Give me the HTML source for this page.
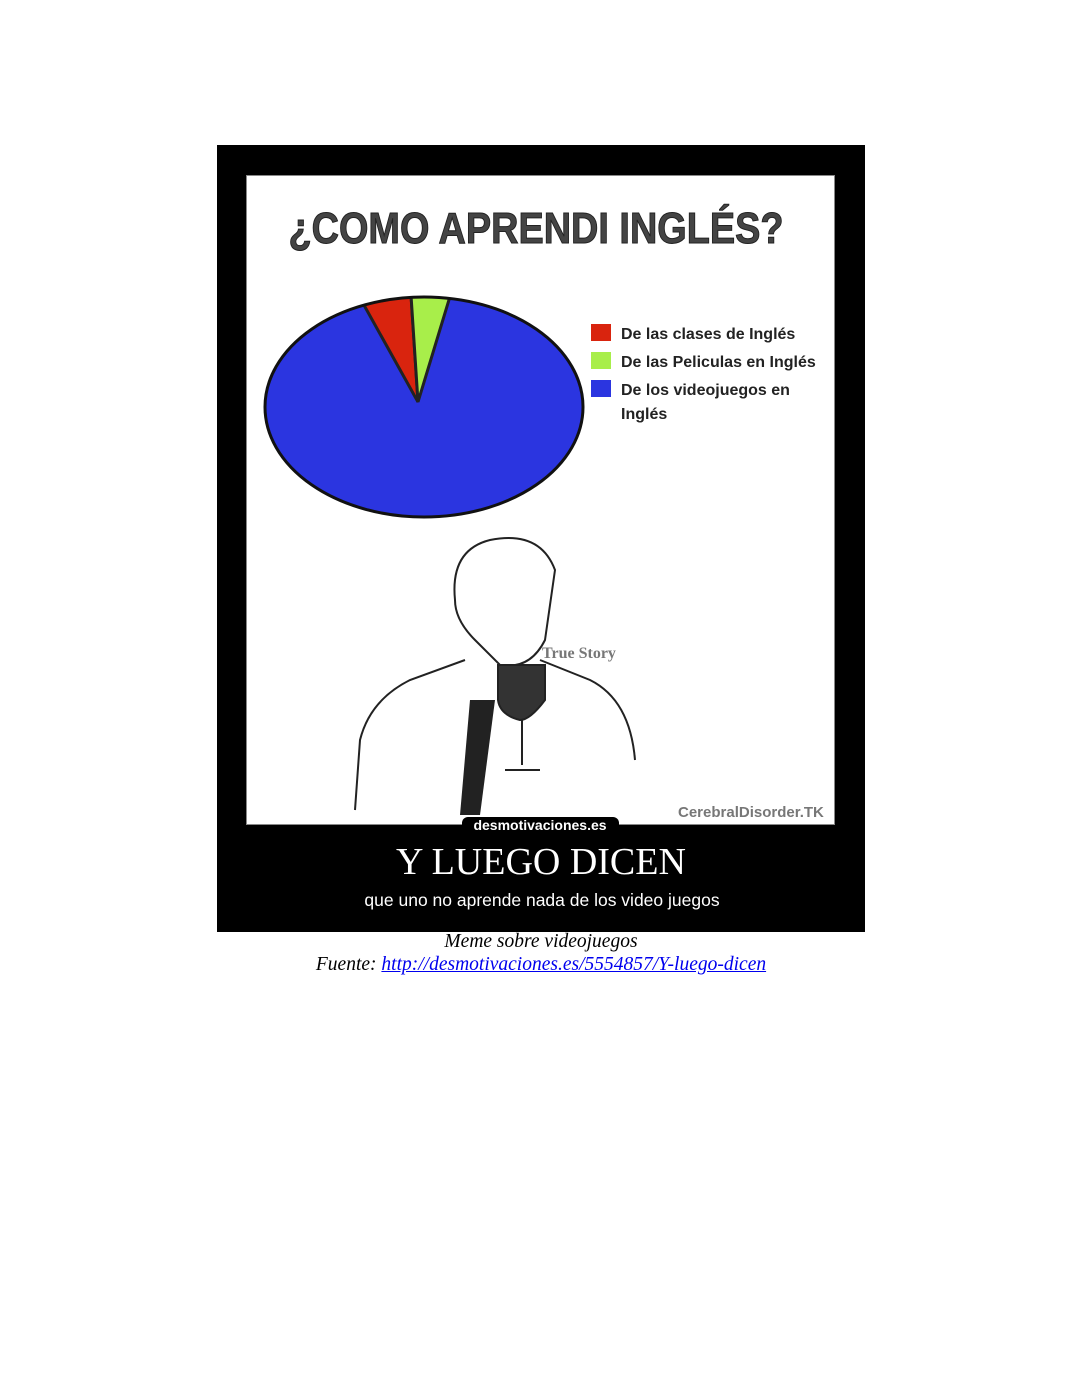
<!DOCTYPE html>
<html><head><meta charset="utf-8"><style>
body{margin:0;background:#fff;width:1082px;height:1400px;position:relative;overflow:hidden}
.blk{position:absolute;left:217px;top:145px;width:648px;height:787px;background:#000}
.inner{position:absolute;left:247px;top:176px;width:587px;height:648px;background:#fff;border:2px solid #fff;outline:1px solid #888;box-sizing:border-box}
.cap{position:absolute;left:0;width:1082px;text-align:center;font-family:"Liberation Serif",serif;font-style:italic;font-size:19.5px;color:#000}
</style></head><body>
<div class="blk"></div>
<div class="inner"></div>
<svg width="1082" height="1400" style="position:absolute;left:0;top:0">
<text x="536" y="243" text-anchor="middle" font-family="Liberation Sans,sans-serif" font-weight="bold" font-size="44" fill="#444" stroke="#222" stroke-width="1" textLength="495" lengthAdjust="spacingAndGlyphs">¿COMO APRENDI INGLÉS?</text>
<clipPath id="c"><ellipse cx="424" cy="407" rx="159" ry="110"/></clipPath>
<ellipse cx="424" cy="407" rx="159" ry="110" fill="#2b35e0"/>
<g clip-path="url(#c)" stroke="#222" stroke-width="3">
<polygon points="418,402 350,280 410,280" fill="#d9240e"/>
<polygon points="418,402 410,280 455,280" fill="#a8ee4a"/>
</g>
<ellipse cx="424" cy="407" rx="159" ry="110" fill="none" stroke="#111" stroke-width="3"/>
<rect x="591" y="324" width="20" height="17" fill="#d9240e"/>
<rect x="591" y="352" width="20" height="17" fill="#a8ee4a"/>
<rect x="591" y="380" width="20" height="17" fill="#2b35e0"/>
<g font-family="Liberation Sans,sans-serif" font-weight="bold" font-size="16" fill="#222">
<text x="621" y="339">De las clases de Inglés</text>
<text x="621" y="367">De las Peliculas en Inglés</text>
<text x="621" y="395">De los videojuegos en</text>
<text x="621" y="419">Inglés</text>
</g>
<g fill="none" stroke="#222" stroke-width="2">
<path d="M455 600 Q450 550 490 540 Q540 530 555 570 L545 640 Q530 670 500 665 L475 640 Q455 620 455 600Z"/>
<path d="M465 660 L410 680 Q370 700 360 740 L355 810"/>
<path d="M540 660 L590 680 Q630 700 635 760"/>
<path d="M498 665 L545 665 L545 700 Q530 720 520 720 Q500 715 498 700Z" fill="#333"/>
<path d="M522 720 L522 765 M505 770 L540 770"/>
</g>
<polygon points="470,700 495,700 480,815 460,815" fill="#222"/>
<text x="542" y="658" font-family="Liberation Serif,serif" font-weight="bold" font-size="16" fill="#777">True Story</text>
<text x="678" y="817" font-family="Liberation Sans,sans-serif" font-weight="bold" font-size="15" fill="#777">CerebralDisorder.TK</text>
<rect x="462" y="817" width="157" height="16" rx="6" fill="#000"/>
<text x="540" y="830" text-anchor="middle" font-family="Liberation Sans,sans-serif" font-weight="bold" font-size="14" fill="#fff">desmotivaciones.es</text>
<text x="541" y="874" text-anchor="middle" font-family="Liberation Serif,serif" font-size="38" fill="#fff">Y LUEGO DICEN</text>
<text x="542" y="906" text-anchor="middle" font-family="Liberation Sans,sans-serif" font-size="17.5" fill="#fff">que uno no aprende nada de los video juegos</text>
</svg>
<div class="cap" style="top:931px">Meme sobre videojuegos</div>
<div class="cap" style="top:954px">Fuente: <span style="color:#00e;text-decoration:underline">http://desmotivaciones.es/5554857/Y-luego-dicen</span></div>
</body></html>
